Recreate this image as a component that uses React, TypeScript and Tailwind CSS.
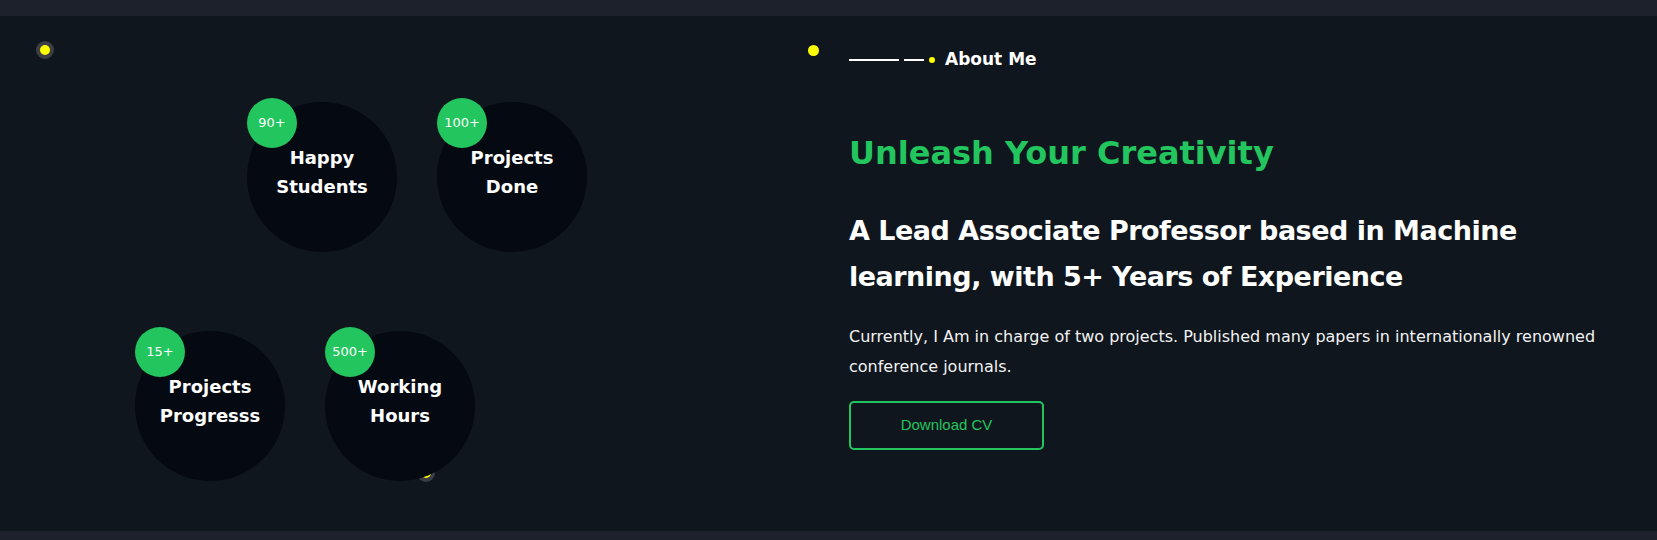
const stats = [
	[
		{ count: '90+', label: ['Happy', 'Students'] },
		{ count: '100+', label: ['Projects', 'Done'] },
	],
	[
		{ count: '15+', label: ['Projects', 'Progresss'] },
		{ count: '500+', label: ['Working', 'Hours'] },
	],
];

type Stat = { count: string; label: string[] };

const StatCircle = ({ stat }: { stat: Stat }) => (
	<div className="relative flex h-[150px] w-[150px] items-center justify-center rounded-full bg-[#050911]">
		<span className="absolute -top-1 left-0 flex h-[50px] w-[50px] items-center justify-center rounded-full bg-[#22c55e] text-[13px] text-white">
			{stat.count}
		</span>
		<p className="mb-[10px] text-center text-[18px] leading-[29px] font-bold text-white">
			{stat.label[0]}
			<br />
			{stat.label[1]}
		</p>
	</div>
);

const Dot = ({ className }: { className: string }) => (
	<span
		className={`absolute flex h-[18px] w-[18px] items-center justify-center rounded-full bg-[#3b3f45] ${className}`}
	>
		<span className="h-[10px] w-[10px] rounded-full bg-[#ffff00]" />
	</span>
);

const App = () => (
	<div className="h-[540px] overflow-hidden bg-[#1c212b] pt-4 font-['DejaVu_Sans',sans-serif]">
		<section className="relative flex h-[515px] bg-[#10161d]">
			<Dot className="top-[25px] left-[36px]" />
			<Dot className="top-[448px] left-[417px]" />
			<span className="absolute top-[29px] left-[808px] h-[11px] w-[11px] rounded-full bg-[#ffff00]" />

			<div className="flex w-[849px] shrink-0 flex-col">
				<div className="flex gap-10 pt-[86px] pl-[247px]">
					{stats[0].map(s => (
						<StatCircle key={s.count} stat={s} />
					))}
				</div>
				<div className="mt-[79px] flex gap-10 pl-[135px]">
					{stats[1].map(s => (
						<StatCircle key={s.count} stat={s} />
					))}
				</div>
			</div>

			<div className="flex w-[770px] flex-col items-start pt-8">
				<div className="flex h-6 items-center">
					<span className="h-[2px] w-[50px] bg-white" />
					<span className="ml-[5px] h-[2px] w-[20px] bg-white" />
					<span className="ml-[5px] h-[6px] w-[6px] rounded-full bg-[#ffff00]" />
					<h3 className="ml-[10px] text-[17px] font-bold text-white">About Me</h3>
				</div>

				<h2 className="mt-[61px] text-[32px] leading-10 font-bold text-[#22c55e]">
					Unleash Your Creativity
				</h2>

				<h1 className="mt-[35px] text-[27px] leading-[46px] font-bold tracking-[-0.5px] text-white">
					A Lead Associate Professor based in Machine learning, with 5+ Years of
					Experience
				</h1>

				<p className="mt-[22px] text-[16px] leading-[30px] text-[#f2f2f2]">
					Currently, I Am in charge of two projects. Published many papers in
					internationally renowned conference journals.
				</p>

				<button className="mt-[19px] h-[49px] w-[195px] rounded-[5px] border-2 border-[#22c55e] font-['Liberation_Sans',sans-serif] text-[15px] text-[#22c55e]">
					Download CV
				</button>
			</div>
		</section>
	</div>
);

export default App;
